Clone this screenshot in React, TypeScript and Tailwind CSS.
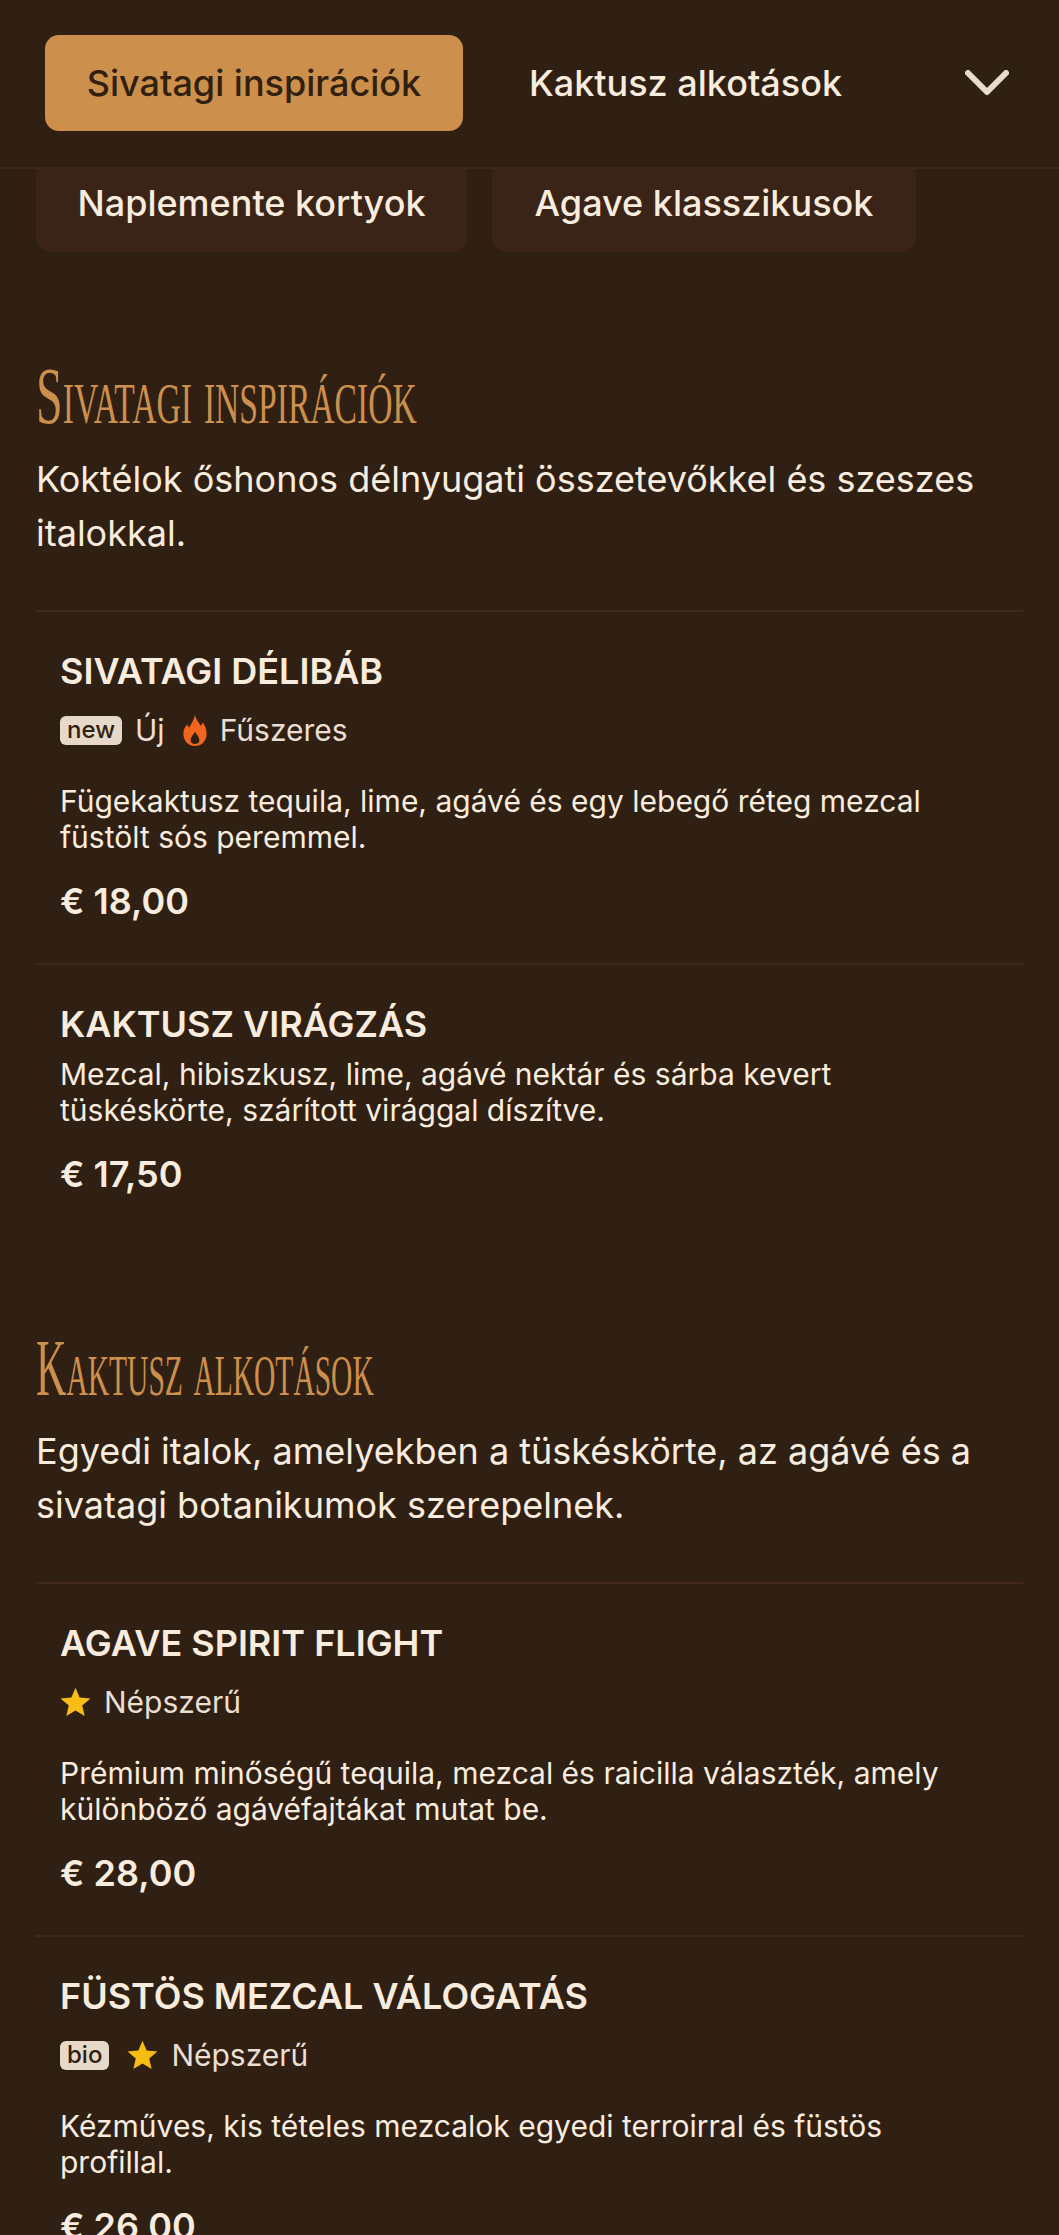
type Tag = { kind: 'new' | 'bio' | 'fire' | 'star'; label?: string }

type Item = {
  name: string
  tags?: Tag[]
  desc: string[]
  price: string
}

const sections: { title: string; padClass: string; scaleClass: string; desc: string[]; items: Item[] }[] = [
  {
    title: 'Sivatagi inspirációk',
    padClass: 'pt-[107px]',
    scaleClass: 'scale-x-[0.6]',
    desc: ['Koktélok őshonos délnyugati összetevőkkel és szeszes', 'italokkal.'],
    items: [
      {
        name: 'Sivatagi délibáb',
        tags: [
          { kind: 'new', label: 'Új' },
          { kind: 'fire', label: 'Fűszeres' },
        ],
        desc: ['Fügekaktusz tequila, lime, agávé és egy lebegő réteg mezcal', 'füstölt sós peremmel.'],
        price: '€ 18,00',
      },
      {
        name: 'Kaktusz virágzás',
        desc: ['Mezcal, hibiszkusz, lime, agávé nektár és sárba kevert', 'tüskéskörte, szárított virággal díszítve.'],
        price: '€ 17,50',
      },
    ],
  },
  {
    title: 'Kaktusz alkotások',
    padClass: 'pt-[95px]',
    scaleClass: 'scale-x-[0.527]',
    desc: ['Egyedi italok, amelyekben a tüskéskörte, az agávé és a', 'sivatagi botanikumok szerepelnek.'],
    items: [
      {
        name: 'Agave Spirit Flight',
        tags: [{ kind: 'star', label: 'Népszerű' }],
        desc: ['Prémium minőségű tequila, mezcal és raicilla választék, amely', 'különböző agávéfajtákat mutat be.'],
        price: '€ 28,00',
      },
      {
        name: 'Füstös mezcal válogatás',
        tags: [{ kind: 'bio' }, { kind: 'star', label: 'Népszerű' }],
        desc: ['Kézműves, kis tételes mezcalok egyedi terroirral és füstös', 'profillal.'],
        price: '€ 26,00',
      },
    ],
  },
]

function Star() {
  return (
    <svg viewBox="0 0 24 24" className="w-[31px] h-[32px] text-[#f7bd14]" fill="currentColor">
      <polygon points="12,1 15.2,8.6 23.6,9.3 17.2,14.7 19.1,22.8 12,18.5 4.9,22.8 6.8,14.7 0.4,9.3 8.8,8.6" />
    </svg>
  )
}

function Flame() {
  return (
    <svg viewBox="0 0 24 32" className="w-[24px] h-[31px] text-[#f2651f]" fill="currentColor" fillRule="evenodd">
      <path d="M12 0 C13 5 16 8 18 11 C19 10 19.5 9 20 7.5 C22.5 11 24 15 24 19 C24 26.5 19 32 12 32 C5 32 0 26.5 0 19 C0 15 2 12 4 9.5 C4.5 11 5 12 6 13 C8 9 11 5 12 0 Z M12 17 C11 20 7.5 22 7.5 26 C7.5 28.5 9.5 30 12 30 C14.5 30 16.5 28.5 16.5 26 C16.5 22 13 20 12 17 Z" />
    </svg>
  )
}

function Badge({ text }: { text: string }) {
  return (
    <span className="h-[29px] px-[7px] flex items-center rounded-[6px] bg-[#e6d9ca] text-[#30200f] text-[24px] font-medium leading-none">
      {text}
    </span>
  )
}

function MenuTag({ tag }: { tag: Tag }) {
  return (
    <span className="flex items-center gap-[13px]">
      {tag.kind === 'new' && <Badge text="new" />}
      {tag.kind === 'bio' && <Badge text="bio" />}
      {tag.kind === 'fire' && <Flame />}
      {tag.kind === 'star' && <Star />}
      {tag.label && <span>{tag.label}</span>}
    </span>
  )
}

function MenuItem({ item }: { item: Item }) {
  return (
    <div className="border-t-2 border-[#40291b] pl-[24px] pt-[37px] pb-[42px]">
      <h3 className="mb-[10px] text-[36px] leading-[44px] font-semibold uppercase text-[#f8ecde]">{item.name}</h3>
      {item.tags && (
        <div className="mt-[19px] mb-[35px] h-[36px] flex items-center gap-[18px] text-[30px] leading-[36px] text-[#eadfd2]">
          {item.tags.map((t, i) => (
            <MenuTag key={i} tag={t} />
          ))}
        </div>
      )}
      <p className="text-[30px] leading-[36px] text-[#f8ecde]">
        {item.desc.map((line) => (
          <span key={line} className="block">
            {line}
          </span>
        ))}
      </p>
      <p className="mt-[26px] text-[36px] leading-[40px] font-semibold text-[#f8ecde]">{item.price}</p>
    </div>
  )
}

export default function App() {
  return (
    <div className="h-[2235px] w-[1059px] overflow-hidden bg-[#302014] font-['Inter',sans-serif]">
      <header className="relative z-10 h-[169px] flex items-center bg-[#302014] border-b-2 border-[#3a281b] pl-[45px] pr-[50px] pb-[1px]">
        <button className="w-[418px] h-[96px] rounded-[14px] bg-[#cd8f4c] text-[#30200f] text-[36px] font-medium">
          Sivatagi inspirációk
        </button>
        <button className="ml-[66px] text-[36px] font-medium text-[#f8ecde]">Kaktusz alkotások</button>
        <svg viewBox="0 0 44 26" className="ml-auto w-[44px] h-[26px] text-[#e8dccd]" fill="none" stroke="currentColor" strokeWidth="6" strokeLinecap="round" strokeLinejoin="round">
          <path d="M3 3 L22 22 L41 3" />
        </svg>
      </header>

      <div className="-mt-[14px] pl-[36px] flex gap-[25px]">
        <div className="w-[431px] h-[97px] pb-[1px] flex items-center justify-center rounded-[14px] bg-[#3a2417] text-[#f8ecde] text-[36px] font-medium">
          Naplemente kortyok
        </div>
        <div className="w-[424px] h-[97px] pb-[1px] flex items-center justify-center rounded-[14px] bg-[#3a2417] text-[#f8ecde] text-[36px] font-medium">
          Agave klasszikusok
        </div>
      </div>

      <main className="pl-[36px] pr-[36px]">
        {sections.map((s) => (
          <section key={s.title} className={s.padClass}>
            <h2 className={`h-[80px] text-[80px] leading-[74px] text-[#cd8f4c] font-['Liberation_Serif',serif] [font-variant:small-caps] origin-left whitespace-nowrap ${s.scaleClass}`}>
              {s.title}
            </h2>
            <p className="mt-[13px] text-[36px] leading-[54px] text-[#f8ecde]">
              {s.desc.map((line) => (
                <span key={line} className="block">
                  {line}
                </span>
              ))}
            </p>
            <div className="mt-[50px]">
              {s.items.map((it) => (
                <MenuItem key={it.name} item={it} />
              ))}
            </div>
          </section>
        ))}
      </main>
    </div>
  )
}
